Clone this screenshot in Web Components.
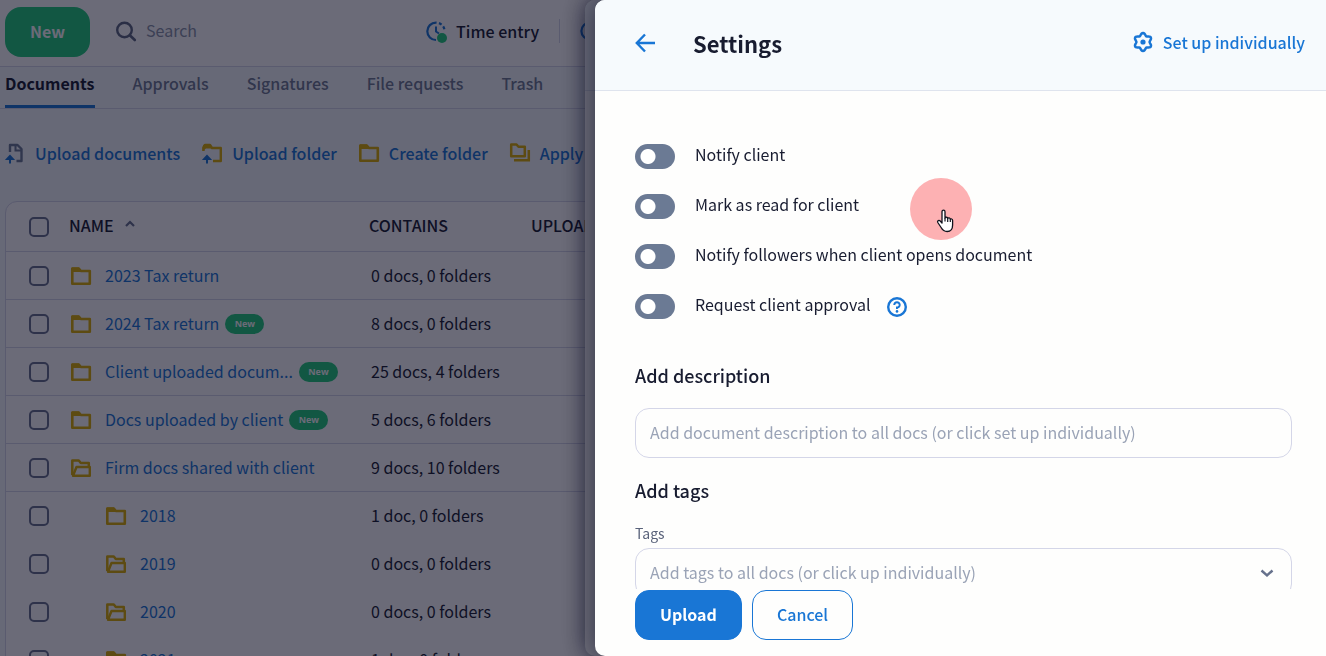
<!DOCTYPE html>
<html lang="en">
<head>
<meta charset="utf-8">
<meta name="viewport" content="width=device-width, initial-scale=1">
<title>Documents</title>
<style>
  html, body { height: 100%; margin: 0; }
  body {
    font-family: "Noto Sans CJK SC", "Noto Sans", sans-serif;
    font-size: 16px;
    line-height: 24px;
    color: #181c30;
    overflow: hidden;
    --blue: #1976d5;
    --green: #22cc7c;
    --slate: #6b7a94;
    --line: #d4d6e8;
    --folder: #dcae00;
  }
</style>
</head>
<body>
<docs-page></docs-page>

<script>
/* Six-lobed cog outline around (10, 10), first lobe at the top. */
const cogPath = 'M' + Array.from({ length: 72 }, (_, i) => {
  const a = i * Math.PI / 36;
  const r = 7.8 + 1.2 * Math.cos(6 * a);
  return (10 + r * Math.sin(a)).toFixed(2) + ' ' + (10 - r * Math.cos(a)).toFixed(2);
}).join('L') + 'Z';

const ICONS = {
  search: '<circle cx="8.500" cy="9" r="7.300" fill="none" stroke="currentColor" stroke-width="2.4"/><path d="M13.800 14.2 18.800 19" stroke="currentColor" stroke-width="2.6" stroke-linecap="round"/>',
  clock: '<path d="M10 19A8.6 8.6 0 0 1 10 1.6" fill="none" stroke="currentColor" stroke-width="2.2"/><path d="M10 1.6a8.6 8.6 0 0 1 8.6 8" fill="none" stroke="currentColor" stroke-width="2.2" stroke-dasharray="3 2.4" stroke-dashoffset="-3"/><path d="M10 5.5v5l3 2" fill="none" stroke="currentColor" stroke-width="2"/><circle cx="16" cy="17" r="5" fill="var(--green)"/>',
  ring: '<circle cx="10" cy="10" r="8.6" fill="none" stroke="currentColor" stroke-width="2.2"/>',
  uploadDoc: '<path d="M5 9V2H12.500L16.500 6V18H11.500" fill="none" stroke="var(--slate)" stroke-width="2.400" stroke-linejoin="round"/><path d="M10.500 2v5.500h6" fill="none" stroke="var(--slate)" stroke-width="2"/><path d="M5 20.500v-7M2.200 16 5 13l2.800 3z" fill="var(--blue)" stroke="var(--blue)" stroke-width="2"/>',
  uploadFolder: '<path d="M1.500 8V4.500L3 2h5l2 3h8.800V18H11" fill="none" stroke="var(--folder)" stroke-width="2.400" stroke-linejoin="round"/><path d="M.5 8V4.500Q1 1 3 1h5l3 4.500H4z" fill="var(--folder)"/><path d="M5 20.500v-7M2.200 16 5 13l2.800 3z" fill="var(--blue)" stroke="var(--blue)" stroke-width="2"/>',
  folder: '<path d="M1.300 2.500h6.500l2 2.500h9v12.700H1.300z" fill="none" stroke="currentColor" stroke-width="2.600" stroke-linejoin="round"/><path d="M1 1.500h7L11 6H1z" fill="currentColor"/>',
  folderOpen: '<path d="M1.300 17V2.500h6.500l2 2.500h8v3" fill="none" stroke="currentColor" stroke-width="2.500" stroke-linejoin="round"/><path d="M2 17.700 5.500 9h13.300v8.700z" fill="none" stroke="currentColor" stroke-width="2.400" stroke-linejoin="round"/>',
  stack: '<path d="M1.200 1.500h5.300l2 2.300h6.300v9.400H1.200z" fill="none" stroke="currentColor" stroke-width="2.500" stroke-linejoin="round"/><path d="M4 17.300h14.800V7" fill="none" stroke="currentColor" stroke-width="2.500"/>',
  back: '<path d="M20 10H2M10 1.500 1.800 10l8.200 8.500" fill="none" stroke="currentColor" stroke-width="2.400"/>',
  gear: `<path d="${cogPath}" fill="none" stroke="currentColor" stroke-width="2.500"/><circle cx="10" cy="10" r="2.600" fill="currentColor"/>`,
  help: '<circle cx="10" cy="10" r="8.800" fill="none" stroke="currentColor" stroke-width="2.400"/><path d="M7.300 8A2.700 2.700 0 1 1 10 10.600V12" fill="none" stroke="currentColor" stroke-width="2"/><circle cx="10" cy="14.400" r="1.300" fill="currentColor"/>',
  up: '<path d="M6 11l4-4 4 4" fill="none" stroke="currentColor" stroke-width="2.200"/>',
  down: '<path d="M4.500 7.500l5.500 5 5.500-5" fill="none" stroke="currentColor" stroke-width="2.400"/>',
  hand: '<path d="M7 2.800C7 .6 10 .6 10 2.800V9c.3-1.200 2.600-1 2.700.5.500-1 2.500-.8 2.600.8.600-.8 2.300-.4 2.300 1.200V16c0 4-2 6.500-5.500 6.500-3.200 0-4.500-1.300-6-4l-3.300-5c-.9-1.700 1.200-2.800 2.400-1.500L7 14z" fill="#fff" stroke="#10121c" stroke-width="1.300" stroke-linejoin="round"/><path d="M10 9v3.500M12.700 9.500V13M15.300 10.300V13" stroke="#10121c" stroke-width="1.200"/>'
};

class UiIcon extends HTMLElement {
  connectedCallback() {
    const size = this.getAttribute('box') || '0 0 20 20';
    this.attachShadow({ mode: 'open' }).innerHTML = `
      <style>
        :host { display: block; flex: none; width: 20px; height: 20px; }
        svg { display: block; width: 100%; height: 100%; overflow: visible; }
      </style>
      <svg viewBox="${size}" aria-hidden="true">${ICONS[this.getAttribute('name')]}</svg>`;
  }
}
customElements.define('ui-icon', UiIcon);

class TopBar extends HTMLElement {
  connectedCallback() {
    this.attachShadow({ mode: 'open' }).innerHTML = `
      <style>
        :host { display: flex; align-items: center; box-sizing: border-box; height: 67px; padding: 0 5px 4px; background: #fff; border-bottom: 1px solid var(--line); }
        .new { width: 85px; height: 50px; padding: 0 0 2px; margin-top: 2px; border: 0; border-radius: 16px; background: var(--green); color: #fff; font: inherit; font-weight: 700; }
        .search { display: flex; align-items: center; gap: 10px; margin-left: 26px; width: 310px; box-sizing: border-box; }
        input { flex: 1; min-width: 0; border: 0; padding: 0 0 2px; background: none; font: inherit; outline: 0; }
        input::placeholder { color: #8a93a8; opacity: 1; }
        .time { display: flex; align-items: center; gap: 10px; border: 0; padding: 0 20px 0 0; border-right: 1px solid var(--line); background: none; font: inherit; font-weight: 500; color: #181c30; white-space: nowrap; }
        ui-icon { color: var(--blue); }
        .search ui-icon { color: #5d6880; }
        .next { margin-left: 20px; }
      </style>
      <button class="new">New</button>
      <label class="search"><ui-icon name="search"></ui-icon><input type="search" placeholder="Search" aria-label="Search"></label>
      <button class="time"><ui-icon name="clock"></ui-icon>Time entry</button>
      <ui-icon class="next" name="ring"></ui-icon>`;
  }
}
customElements.define('top-bar', TopBar);

class TabBar extends HTMLElement {
  connectedCallback() {
    const tabs = ['Documents', 'Approvals', 'Signatures', 'File requests', 'Trash'];
    this.attachShadow({ mode: 'open' }).innerHTML = `
      <style>
        :host { display: block; border-bottom: 1px solid var(--line); }
        nav { display: flex; gap: 38px; padding: 0 5px; }
        a { box-sizing: border-box; height: 41px; padding-top: 4px; border-bottom: 3px solid transparent; color: #6f7a91; font-weight: 500; text-decoration: none; white-space: nowrap; }
        a[aria-current] { color: #181c30; font-weight: 700; border-color: var(--blue); }
      </style>
      <nav>${tabs.map((t, i) => `<a href="#"${i ? '' : ' aria-current="page"'}>${t}</a>`).join('')}</nav>`;
  }
}
customElements.define('tab-bar', TabBar);

class ActionBar extends HTMLElement {
  connectedCallback() {
    const items = [['uploadDoc', 'Upload documents'], ['uploadFolder', 'Upload folder'], ['folder', 'Create folder'], ['stack', 'Apply template']];
    this.attachShadow({ mode: 'open' }).innerHTML = `
      <style>
        :host { display: flex; align-items: center; gap: 22px; height: 88px; padding: 0 5px 4px; }
        button { display: flex; align-items: center; gap: 10px; border: 0; padding: 0; background: none; font: inherit; font-weight: 500; color: var(--blue); white-space: nowrap; }
        ui-icon { color: var(--folder); }
      </style>
      ${items.map(([i, t]) => `<button><ui-icon name="${i}"></ui-icon>${t}</button>`).join('')}`;
  }
}
customElements.define('action-bar', ActionBar);

class NewBadge extends HTMLElement {
  connectedCallback() {
    this.attachShadow({ mode: 'open' }).innerHTML = `
      <style>
        :host { display: block; flex: none; width: 39px; height: 20px; border-radius: 10px; background: var(--green); color: #fff; font: 700 9px/20px "Open Sans", sans-serif; text-align: center; }
      </style><slot></slot>`;
  }
}
customElements.define('new-badge', NewBadge);

class DocTable extends HTMLElement {
  connectedCallback() {
    const rows = [
      ['2023 Tax return', '0 docs, 0 folders', 'folder'],
      ['2024 Tax return', '8 docs, 0 folders', 'folder', 'new'],
      ['Client uploaded docum...', '25 docs, 4 folders', 'folder', 'new'],
      ['Docs uploaded by client', '5 docs, 6 folders', 'folder', 'new'],
      ['Firm docs shared with client', '9 docs, 10 folders', 'folderOpen'],
      ['2018', '1 doc, 0 folders', 'folder', '', 'nested'],
      ['2019', '0 docs, 0 folders', 'folderOpen', '', 'nested'],
      ['2020', '0 docs, 0 folders', 'folderOpen', '', 'nested'],
      ['2021', '1 doc, 0 folders', 'folder', '', 'nested']
    ];
    this.attachShadow({ mode: 'open' }).innerHTML = `
      <style>
        :host { display: block; margin: 0 5px; border: 1px solid var(--line); border-radius: 12px; background: #fff; }
        table { width: 100%; table-layout: fixed; border-spacing: 0; }
        th, td { box-sizing: border-box; padding: 0 0 2px; text-align: left; border-bottom: 1px solid var(--line); white-space: nowrap; }
        th { height: 50px; padding-bottom: 3px; font-weight: 500; }
        td { height: 48px; padding-left: 2px; }
        .nested td { border-color: transparent; }
        .pick { width: 63px; padding: 0 0 0 23px; }
        .name { width: 300px; }
        .contains { width: 162px; }
        input { appearance: none; display: block; width: 20px; height: 20px; margin: 0; border: 2px solid #66708c; border-radius: 5px; box-sizing: border-box; }
        .sort { display: flex; align-items: center; gap: 6px; }
        .sort ui-icon { color: #66708c; }
        .item { display: flex; align-items: center; }
        .item ui-icon { color: var(--folder); margin: 2px 14px 0 0; }
        .item new-badge { margin-top: 2px; }
        .nested .item { padding-left: 35px; }
        a { color: var(--blue); text-decoration: none; margin-right: 6px; }
      </style>
      <table>
        <thead><tr>
          <th class="pick"><input type="checkbox" aria-label="Select all"></th>
          <th class="name"><span class="sort">NAME<ui-icon name="up"></ui-icon></span></th>
          <th class="contains">CONTAINS</th>
          <th>UPLOADED</th>
        </tr></thead>
        <tbody>${rows.map(([n, c, i, b, k]) => `
          <tr class="${k || ''}">
            <td class="pick"><input type="checkbox" aria-label="Select ${n}"></td>
            <td><span class="item"><ui-icon name="${i}"></ui-icon><a href="#">${n}</a>${b ? '<new-badge>New</new-badge>' : ''}</span></td>
            <td>${c}</td><td></td>
          </tr>`).join('')}
        </tbody>
      </table>`;
  }
}
customElements.define('doc-table', DocTable);

class SideDrawer extends HTMLElement {
  connectedCallback() {
    this.attachShadow({ mode: 'open' }).innerHTML = `
      <style>
        :host { position: fixed; inset: 0 0 0 var(--edge); display: flex; flex-direction: column; overflow: hidden; border-radius: 10px 0 0 10px; background: #fefefd; box-shadow: 0 0 24px rgba(10, 12, 36, .6); }
        header { flex: none; display: flex; align-items: center; height: 90px; border-bottom: 1px solid #dfe4ee; background: #f6fafd; }
        .body { flex: 1; min-height: 0; overflow: auto; scrollbar-width: none; }
        footer { flex: none; }
      </style>
      <header><slot name="header"></slot></header>
      <div class="body"><slot></slot></div>
      <footer><slot name="footer"></slot></footer>`;
  }
}
customElements.define('side-drawer', SideDrawer);

class DrawerHeading extends HTMLElement {
  connectedCallback() {
    this.attachShadow({ mode: 'open' }).innerHTML = `
      <style>
        :host { flex: 1; display: flex; align-items: center; padding: 0 21px 4px 40px; }
        button { border: 0; padding: 0; background: none; color: var(--blue); }
        h1 { flex: 1; margin: 0 0 0 38px; font-size: 22px; line-height: 30px; font-weight: 700; }
        a { display: flex; align-items: center; gap: 10px; padding-bottom: 2px; color: var(--blue); font-weight: 500; text-decoration: none; }
      </style>
      <button aria-label="Back"><ui-icon name="back"></ui-icon></button>
      <h1><slot></slot></h1>
      <a href="#"><ui-icon name="gear"></ui-icon>Set up individually</a>`;
  }
}
customElements.define('drawer-heading', DrawerHeading);

class ToggleRow extends HTMLElement {
  connectedCallback() {
    this.attachShadow({ mode: 'open' }).innerHTML = `
      <style>
        :host { display: flex; align-items: center; height: 25px; }
        label { display: flex; align-items: center; gap: 20px; }
        span { padding-bottom: 4px; line-height: 21px; }
        input { appearance: none; width: 40px; height: 25px; margin: 0; border-radius: 13px; background: radial-gradient(circle at 13px 50%, #fff 7px, transparent 8px), var(--slate); }
        button { border: 0; padding: 0; margin-left: 16px; background: none; color: var(--blue); }
      </style>
      <label><input type="checkbox" role="switch"><span><slot></slot></span></label>
      ${this.hasAttribute('help') ? '<button aria-label="Help"><ui-icon name="help"></ui-icon></button>' : ''}`;
  }
}
customElements.define('toggle-row', ToggleRow);

class SettingsForm extends HTMLElement {
  connectedCallback() {
    this.attachShadow({ mode: 'open' }).innerHTML = `
      <style>
        :host { display: block; padding: 53px 34px 16px 40px; }
        .toggles { display: grid; gap: 25px; }
        h2 { margin: 0; font-size: 18px; line-height: 24px; font-weight: 500; }
        .description { margin-top: 44px; }
        .tags { margin-top: 20px; }
        input, select { appearance: none; display: block; box-sizing: border-box; width: 100%; height: 50px; padding: 0 14px 2px; border: 1px solid var(--line); border-radius: 14px; background: none; font: inherit; color: #9aa3b6; outline: 0; }
        input { margin-top: 21px; }
        input::placeholder { color: #9aa3b6; opacity: 1; }
        .label { display: block; margin-top: 21px; font-size: 14px; line-height: 20px; color: #59627a; padding-bottom: 5px; }
        .select { position: relative; }
        .select ui-icon { position: absolute; right: 15px; top: 15px; color: #66718c; pointer-events: none; }
      </style>
      <div class="toggles">
        <toggle-row>Notify client</toggle-row>
        <toggle-row>Mark as read for client</toggle-row>
        <toggle-row>Notify followers when client opens document</toggle-row>
        <toggle-row help>Request client approval</toggle-row>
      </div>
      <h2 class="description" id="d">Add description</h2>
      <input type="text" aria-labelledby="d" placeholder="Add document description to all docs (or click set up individually)">
      <h2 class="tags">Add tags</h2>
      <label class="label" for="t">Tags</label>
      <div class="select">
        <select id="t"><option>Add tags to all docs (or click up individually)</option></select>
        <ui-icon name="down"></ui-icon>
      </div>`;
  }
}
customElements.define('settings-form', SettingsForm);

class FormActions extends HTMLElement {
  connectedCallback() {
    this.attachShadow({ mode: 'open' }).innerHTML = `
      <style>
        :host { display: flex; gap: 10px; padding: 1px 40px 16px; }
        button { height: 50px; padding: 0 24px 2px; border: 1px solid var(--blue); border-radius: 14px; font: inherit; background: #fefefd; color: var(--blue); font-weight: 500; }
        .primary { background: var(--blue); color: #fff; font-weight: 700; }
      </style>
      <button class="primary">Upload</button><button>Cancel</button>`;
  }
}
customElements.define('form-actions', FormActions);

class ClickPointer extends HTMLElement {
  connectedCallback() {
    this.attachShadow({ mode: 'open' }).innerHTML = `
      <style>
        :host { position: fixed; left: 910px; top: 178px; display: grid; place-items: center; width: 62px; height: 62px; border-radius: 50%; background: #fdb1b3; pointer-events: none; }
        ui-icon { width: 20px; height: 24px; margin: 23px 0 0 7px; }
      </style>
      <ui-icon name="hand" box="0 0 20 24"></ui-icon>`;
  }
}
customElements.define('click-pointer', ClickPointer);

class DocsPage extends HTMLElement {
  connectedCallback() {
    this.attachShadow({ mode: 'open' }).innerHTML = `
      <style>
        :host { display: block; height: 100%; }
        main { height: 100%; overflow: hidden; background: #f5fafd; }
        .under { --edge: 585px; }
        .over { --edge: 595px; }
        .scrim { position: fixed; inset: 0; background: rgba(8, 8, 30, .6); }
      </style>
      <main>
        <top-bar></top-bar>
        <tab-bar></tab-bar>
        <action-bar></action-bar>
        <doc-table></doc-table>
      </main>
      <side-drawer class="under"></side-drawer>
      <div class="scrim"></div>
      <side-drawer class="over">
        <drawer-heading slot="header">Settings</drawer-heading>
        <settings-form></settings-form>
        <form-actions slot="footer"></form-actions>
      </side-drawer>
      <click-pointer></click-pointer>`;
  }
}
customElements.define('docs-page', DocsPage);
</script>
</body>
</html>
